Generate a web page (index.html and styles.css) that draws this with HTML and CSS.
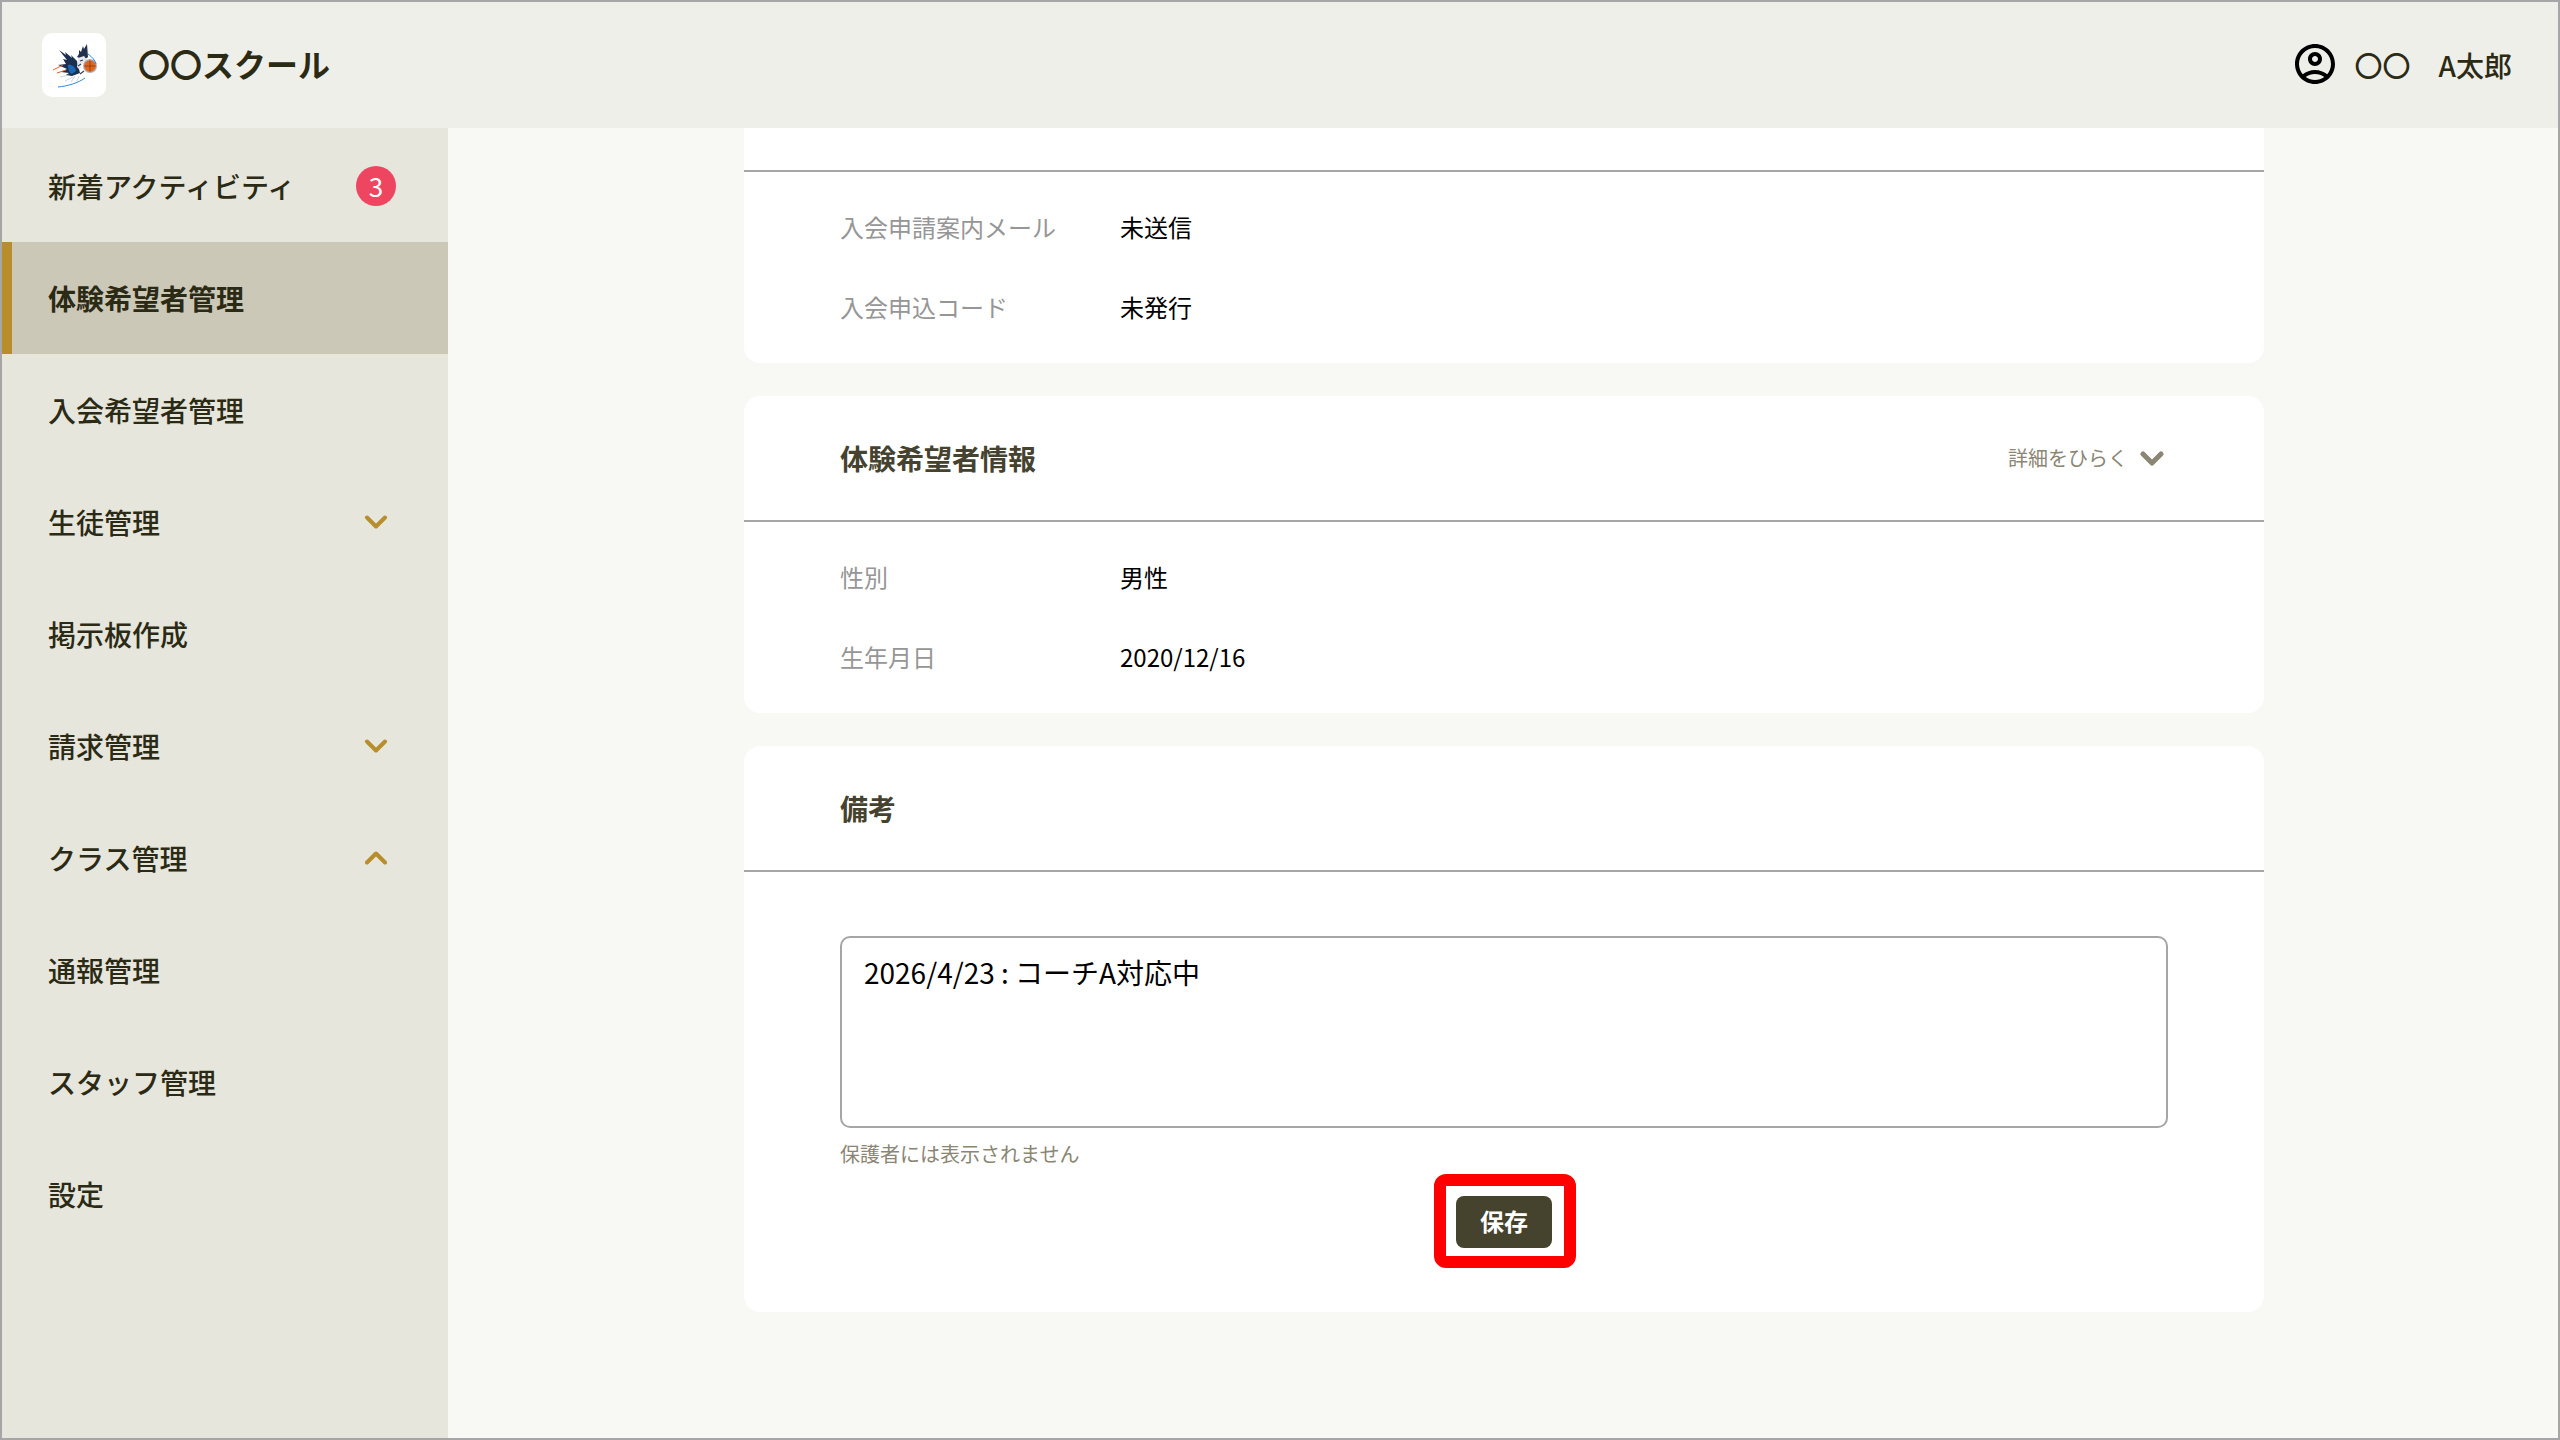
FILE: index.html
```html
<!DOCTYPE html>
<html lang="ja">
<head>
<meta charset="utf-8">
<title>体験希望者管理</title>
<link rel="stylesheet" href="styles.css">
</head>
<body>
<div class="app">
  <header class="topbar">
    <div class="brand">
      <div class="logo">
        <svg viewBox="0 0 64 64" width="64" height="64" aria-hidden="true">
          <path d="M17 17 L24 22 L23 19 L30 25 L29 22 L35 28 L38 40 L30 43 L24 42 L27 40 L19 39 L25 36 L16 32 L24 31 L21 26 L25 27 Z" fill="#1b2f4f"/>
          <path d="M35 24 L37 21 L37 17 L39 19 L41 13 L42 16 L45 11 L46 24 L42 27 Z" fill="#22324e"/>
          <path d="M26 32 C29 31 33 33 34 38 L30 41 C27 40 26 36 26 32Z" fill="#1c67b3"/>
          <path d="M36 25 L42 23 L45 27 L40 31 L38 37 L35 34 Z" fill="#e6e9ee"/>
          <path d="M38 28 L41 27 M36 33 L39 31 M38 41 L42 38" stroke="#3a3f4a" stroke-width="1.2" fill="none"/>
          <circle cx="48" cy="33" r="7" fill="#aab0ba"/>
          <circle cx="48" cy="33" r="5.8" fill="#e0661f"/>
          <path d="M42.5 33 H53.5 M48 27.5 V38.5" stroke="#7a3512" stroke-width=".7" fill="none"/>
          <path d="M11 37 L21 32 M15 40 L24 37" stroke="#e4622a" stroke-width="1" fill="none"/>
          <path d="M16 54 C26 53 36 50 43 45 M46 21 C50 24 53 27 54 31" stroke="#2f87dc" stroke-width="1" fill="none"/>
          <path d="M18 44 L27 42 M23 48 L31 44 M37 43 L35 48 M33 43 L29 49" stroke="#aab4c2" stroke-width=".6" fill="none"/>
        </svg>
      </div>
      <span class="brand-name">〇〇スクール</span>
    </div>
    <div class="account">
      <svg class="account-icon" viewBox="0 0 24 24" width="48" height="48" aria-hidden="true">
        <path d="M12 2C6.48 2 2 6.48 2 12s4.48 10 10 10 10-4.48 10-10S17.52 2 12 2zM7.35 18.5C8.66 17.56 10.26 17 12 17s3.34.56 4.65 1.5c-1.31.94-2.91 1.5-4.65 1.5s-3.34-.56-4.65-1.5zm10.79-1.38C16.45 15.8 14.32 15 12 15s-4.45.8-6.14 2.12C4.7 15.73 4 13.95 4 12c0-4.42 3.58-8 8-8s8 3.58 8 8c0 1.95-.7 3.73-1.86 5.12zM12 6c-1.93 0-3.5 1.57-3.5 3.5S10.07 13 12 13s3.5-1.57 3.5-3.5S13.93 6 12 6zm0 5c-.83 0-1.5-.67-1.5-1.5S11.17 8 12 8s1.5.67 1.5 1.5S12.83 11 12 11z"/>
      </svg>
      <span class="account-org">〇〇</span>
      <span class="account-name">A太郎</span>
    </div>
  </header>
  <div class="body">
    <nav class="sidebar">
      <a class="nav-item"><span>新着アクティビティ</span><span class="nav-end"><span class="badge">3</span></span></a>
      <a class="nav-item active"><span>体験希望者管理</span></a>
      <a class="nav-item"><span>入会希望者管理</span></a>
      <a class="nav-item"><span>生徒管理</span><span class="nav-end"><svg class="chev" viewBox="0 0 24 14" width="24" height="14"><path d="M3 2.5 L12 11.5 L21 2.5"/></svg></span></a>
      <a class="nav-item"><span>掲示板作成</span></a>
      <a class="nav-item"><span>請求管理</span><span class="nav-end"><svg class="chev" viewBox="0 0 24 14" width="24" height="14"><path d="M3 2.5 L12 11.5 L21 2.5"/></svg></span></a>
      <a class="nav-item"><span>クラス管理</span><span class="nav-end"><svg class="chev" viewBox="0 0 24 14" width="24" height="14"><path d="M3 11.5 L12 2.5 L21 11.5"/></svg></span></a>
      <a class="nav-item"><span>通報管理</span></a>
      <a class="nav-item"><span>スタッフ管理</span></a>
      <a class="nav-item"><span>設定</span></a>
    </nav>
    <main class="main">
      <div class="stack">
        <section class="card">
          <div class="card-head"></div>
          <dl class="info">
            <div class="info-row"><dt>入会申請案内メール</dt><dd>未送信</dd></div>
            <div class="info-row"><dt>入会申込コード</dt><dd>未発行</dd></div>
          </dl>
        </section>
        <section class="card">
          <div class="card-head">
            <h2>体験希望者情報</h2>
            <button class="toggle" type="button">詳細をひらく
              <svg class="toggle-chev" viewBox="0 0 24 15" width="24" height="15"><path d="M3 3 L12 12 L21 3"/></svg>
            </button>
          </div>
          <dl class="info">
            <div class="info-row"><dt>性別</dt><dd>男性</dd></div>
            <div class="info-row"><dt>生年月日</dt><dd>2020/12/16</dd></div>
          </dl>
        </section>
        <section class="card">
          <div class="card-head"><h2>備考</h2></div>
          <div class="note-body">
            <textarea class="note" readonly>2026/4/23 : コーチA対応中</textarea>
            <p class="hint">保護者には表示されません</p>
            <div class="actions">
              <div class="highlight"><button class="save" type="button">保存</button></div>
            </div>
          </div>
        </section>
      </div>
    </main>
  </div>
</div>
</body>
</html>
```

FILE: styles.css
```css
* { box-sizing: border-box; }
html, body { margin: 0; padding: 0; }
body {
  font-family: "Noto Sans CJK JP", "Noto Sans", sans-serif;
  color: #2b2a14;
}
.app {
  width: 2560px;
  height: 1440px;
  border: 2px solid #a6a6a6;
  display: flex;
  flex-direction: column;
  overflow: hidden;
}
.topbar {
  height: 126px;
  flex: none;
  background: #efefe9;
  display: flex;
  align-items: center;
  justify-content: space-between;
  padding: 0 46px 0 40px;
}
.brand { display: flex; align-items: center; gap: 32px; }
.logo {
  width: 64px;
  height: 64px;
  background: #fff;
  border-radius: 10px;
  overflow: hidden;
}
.logo svg { display: block; }
.brand-name { font-size: 32px; font-weight: 700; line-height: 48px; margin-top: -4px; }
.account { display: flex; align-items: center; font-size: 28px; font-weight: 500; line-height: 40px; }
.account-icon { display: block; fill: #000; margin-right: 16px; margin-top: -2px; }
.account-org { margin-right: 28px; margin-top: -1px; }
.account-name { margin-top: -1px; }
.body { flex: 1; display: flex; min-height: 0; }
.sidebar {
  width: 446px;
  flex: none;
  background: #e6e6dd;
  padding-top: 2px;
}
.nav-item {
  height: 112px;
  display: flex;
  align-items: center;
  justify-content: space-between;
  padding: 0 52px 0 46px;
  font-size: 28px;
  font-weight: 500;
  line-height: 40px;
}
.nav-item.active {
  background: #cbc8b8;
  border-left: 10px solid #b88d2c;
  padding-left: 36px;
  font-weight: 700;
}
.nav-end { width: 40px; display: flex; justify-content: center; align-items: center; }
.badge {
  width: 40px;
  height: 40px;
  border-radius: 50%;
  background: #ee4560;
  color: #fff;
  font-size: 26px;
  font-weight: 400;
  line-height: 40px;
  text-align: center;
}
.chev { display: block; fill: none; stroke: #b88d2c; stroke-width: 4; stroke-linecap: round; stroke-linejoin: round; }
.main {
  flex: 1;
  min-width: 0;
  background: #f8f9f4;
  overflow: hidden;
  display: flex;
  justify-content: center;
  padding-left: 2px;
}
.stack {
  width: 1520px;
  margin-top: -82px;
  display: flex;
  flex-direction: column;
  gap: 33px;
}
.card { background: #fff; border-radius: 16px; }
.card-head {
  height: 126px;
  border-bottom: 2px solid #a6a6a6;
  padding: 0 96px;
  display: flex;
  align-items: center;
  justify-content: space-between;
}
.card-head h2 {
  margin: 0;
  font-size: 28px;
  line-height: 40px;
  font-weight: 700;
  color: #45432f;
}
.toggle {
  display: flex;
  align-items: center;
  gap: 12px;
  padding: 0;
  margin-right: 4px;
  border: 0;
  background: none;
  font: inherit;
  font-size: 20px;
  line-height: 30px;
  color: #8a8673;
}
.toggle-chev { display: block; fill: none; stroke: #8a8673; stroke-width: 5; stroke-linecap: round; stroke-linejoin: round; }
.info { margin: 0; padding: 35px 96px 36px; display: flex; flex-direction: column; gap: 40px; }
.info-row { display: flex; font-size: 24px; line-height: 40px; }
.info-row dt { width: 280px; color: #969696; }
.info-row dd { margin: 0; color: #000; }
.note-body { padding: 64px 96px; }
.note {
  display: block;
  width: 100%;
  height: 192px;
  border: 2px solid #a6a6a6;
  border-radius: 10px;
  padding: 14px 22px;
  font: inherit;
  font-size: 28px;
  line-height: 40px;
  color: #000;
  resize: none;
  outline: none;
  background: #fff;
}
.hint { margin: 11px 0 0; font-size: 20px; line-height: 30px; color: #8a8673; }
.actions { display: flex; justify-content: center; margin-top: 27px; }
.highlight { position: relative; display: flex; }
.highlight::after {
  content: "";
  position: absolute;
  top: -22px;
  bottom: -20px;
  left: -22px;
  right: -24px;
  border: 12px solid #ff0000;
  border-radius: 12px;
  pointer-events: none;
}
.save {
  width: 96px;
  height: 52px;
  border: 0;
  border-radius: 8px;
  background: #45422e;
  color: #fff;
  font: inherit;
  font-size: 24px;
  font-weight: 700;
  padding: 0 0 3px;
}
```
